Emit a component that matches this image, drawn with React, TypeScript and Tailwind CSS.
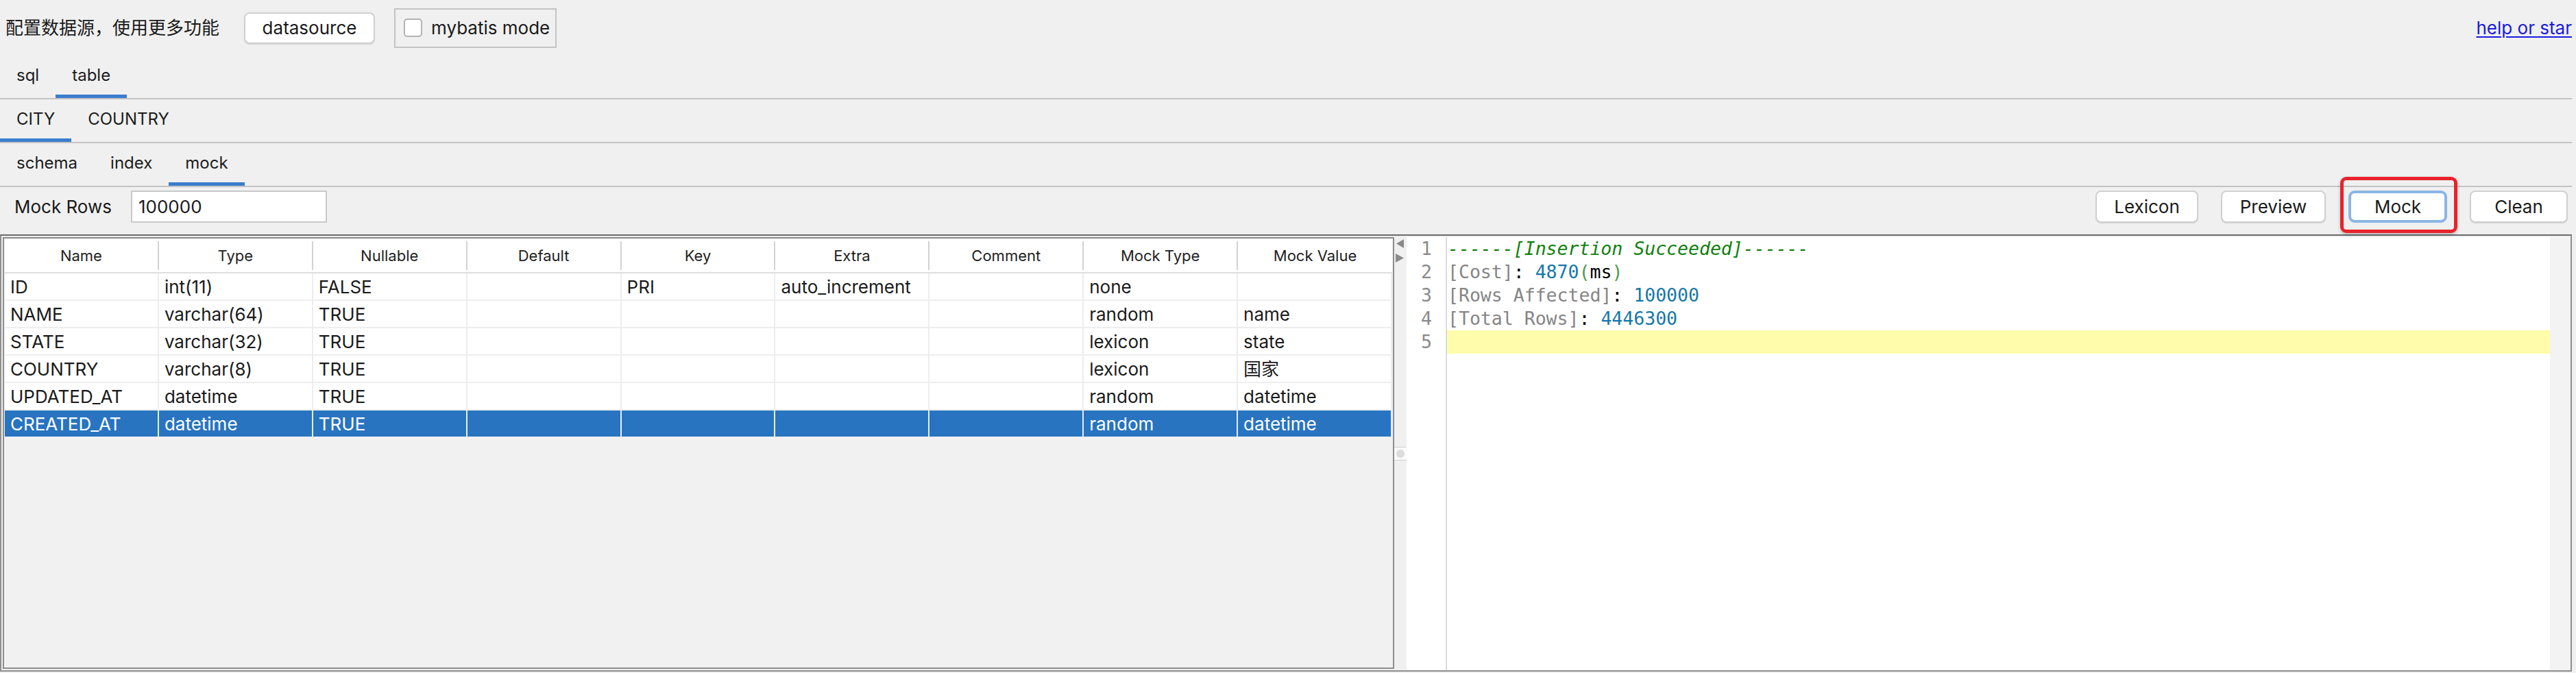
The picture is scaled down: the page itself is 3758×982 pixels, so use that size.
import React from "react";

const cols = ["Name", "Type", "Nullable", "Default", "Key", "Extra", "Comment", "Mock Type", "Mock Value"];
const rows: string[][] = [
  ["ID", "int(11)", "FALSE", "", "PRI", "auto_increment", "", "none", ""],
  ["NAME", "varchar(64)", "TRUE", "", "", "", "", "random", "name"],
  ["STATE", "varchar(32)", "TRUE", "", "", "", "", "lexicon", "state"],
  ["COUNTRY", "varchar(8)", "TRUE", "", "", "", "", "lexicon", "国家"],
  ["UPDATED_AT", "datetime", "TRUE", "", "", "", "", "random", "datetime"],
  ["CREATED_AT", "datetime", "TRUE", "", "", "", "", "random", "datetime"],
];

function TabRow({ tabs, active }: { tabs: string[]; active: number }) {
  return (
    <div className="h-[64px] flex border-b-2 border-[#c3c3c3]">
      {tabs.map((t, i) => (
        <div key={t} className="flex flex-col">
          <div className="flex-1 flex items-center px-[24px] text-[24px] text-[#1c1c1c]">{t}</div>
          <div className={i === active ? "h-[5px] bg-[#3b7dce]" : "h-[5px]"} />
        </div>
      ))}
    </div>
  );
}

function Btn({ label, w }: { label: string; w: string }) {
  return (
    <button
      className={`${w} h-[47px] bg-white border-2 border-[#d0d0d0] rounded-[8px] text-[26px] text-[#1a1a1a] shadow-[0_1px_1px_rgba(0,0,0,0.12)]`}
    >
      {label}
    </button>
  );
}

export default function App() {
  return (
    <div className="w-[3758px] h-[982px] overflow-hidden bg-[#f0f0f0] pr-[6px] font-[Inter,'Noto_Sans_CJK_SC',sans-serif] text-[#1a1a1a]">
      {/* top bar */}
      <div className="h-[81px] flex items-center pl-[8px]">
        <span className="text-[26px]">配置数据源，使用更多功能</span>
        <button className="ml-[36px] w-[191px] h-[46px] bg-white border-2 border-[#d0d0d0] rounded-[8px] text-[26px] shadow-[0_1px_1px_rgba(0,0,0,0.12)]">
          datasource
        </button>
        <div className="ml-[28px] w-[237px] h-[58px] border-2 border-[#c4c4c4] flex items-center pl-[12px] gap-[13px]">
          <span className="w-[27px] h-[27px] bg-white border-2 border-[#b3b3b3] rounded-[5px]" />
          <span className="text-[26px]">mybatis mode</span>
        </div>
        <a className="ml-auto text-[26px] text-[#1a1ae0] underline underline-offset-[3px]">help or star</a>
      </div>

      <TabRow tabs={["sql", "table"]} active={1} />
      <TabRow tabs={["CITY", "COUNTRY"]} active={0} />
      <TabRow tabs={["schema", "index", "mock"]} active={2} />

      {/* mock bar */}
      <div className="h-[69px] flex items-start pt-[5px] pl-[21px] pr-[6px]">
        <span className="h-[47px] flex items-center text-[26px]">Mock Rows</span>
        <div className="ml-[28px] w-[286px] h-[47px] bg-white border-2 border-[#c9c9c9] flex items-center pl-[9px] text-[26px]">
          100000
        </div>
        <div className="ml-auto flex items-start gap-[33px]">
          <Btn label="Lexicon" w="w-[150px]" />
          <Btn label="Preview" w="w-[153px]" />
          <div className="relative">
            <button className="w-[144px] h-[47px] bg-white border-[4px] border-[#8ab6e6] rounded-[9px] text-[26px] text-[#1a1a1a]">
              Mock
            </button>
            <div className="absolute -top-[20px] -left-[12px] -right-[15px] -bottom-[15px] border-[5px] border-[#e8232b] rounded-[9px] shadow-[0_2px_4px_rgba(0,0,0,0.25)]" />
          </div>
          <Btn label="Clean" w="w-[143px]" />
        </div>
      </div>

      {/* split pane */}
      <div className="h-[638px] flex border-2 border-[#8e8e8e] border-t-[#6b6b6b]">
        {/* left scroll pane */}
        <div className="w-[2030px] ml-[2px] my-[2px] border-2 border-[#8e8e8e] bg-[#f1f1f1] p-[1px]">
          <div className="grid grid-cols-9 h-[50px] bg-white border-b-2 border-[#dedede] py-[3px]">
            {cols.map((c, i) => (
              <div
                key={c}
                className={`flex items-center justify-center text-[22px] text-[#222] ${i < 8 ? "border-r-2 border-[#d2d2d2]" : ""}`}
              >
                {c}
              </div>
            ))}
          </div>
          {rows.map((r, ri) => {
            const sel = ri === rows.length - 1;
            return (
              <div
                key={ri}
                className={`grid grid-cols-9 h-[40px] border-b-2 ${sel ? "bg-[#2874c1] text-white border-[#f1f1f1]" : "bg-white border-[#eeeeee]"}`}
              >
                {r.map((v, ci) => (
                  <div
                    key={ci}
                    className={`flex items-center pl-[8px] text-[26px] border-r-2 ${sel ? "border-[#e4ecf6]" : "border-[#ededed]"}`}
                  >
                    {v}
                  </div>
                ))}
              </div>
            );
          })}
        </div>

        {/* divider */}
        <div className="w-[18px] flex flex-col">
          <svg width="18" height="44" viewBox="0 0 18 44">
            <polygon points="3,11.5 14,5 14,18" fill="#8a8a8a" />
            <polygon points="2,26 14,32.5 2,39" fill="#8a8a8a" />
          </svg>
          <div className="mt-[264px] h-[20px] bg-[#fafafa] border-y border-[#d0d0d0] flex items-center justify-center">
            <span className="w-[12px] h-[12px] rounded-full bg-[#dcdcdc]" />
          </div>
        </div>

        {/* right editor */}
        <div className="flex-1 flex mt-[2px] font-['DejaVu_Sans_Mono',monospace] text-[26.5px] leading-[34px]">
          <div className="w-[59px] bg-white border-r-2 border-[#dcdcdc] text-right pr-[20px] text-[#8a8a8a]">
            {[1, 2, 3, 4, 5].map((n) => (
              <div key={n} className="h-[34px]">{n}</div>
            ))}
          </div>
          <div className="flex-1 bg-white whitespace-pre">
            <div className="h-[34px] pl-[1px] italic text-[#11800f]">------[Insertion Succeeded]------</div>
            <div className="h-[34px] pl-[1px]">
              <span className="text-[#858585]">[Cost]</span>
              <span className="text-black">: </span>
              <span className="text-[#1577a8]">4870</span>
              <span className="text-[#4f9a4f]">(</span>
              <span className="text-black">ms</span>
              <span className="text-[#4f9a4f]">)</span>
            </div>
            <div className="h-[34px] pl-[1px]">
              <span className="text-[#858585]">[Rows Affected]</span>
              <span className="text-black">: </span>
              <span className="text-[#1577a8]">100000</span>
            </div>
            <div className="h-[34px] pl-[1px]">
              <span className="text-[#858585]">[Total Rows]</span>
              <span className="text-black">: </span>
              <span className="text-[#1577a8]">4446300</span>
            </div>
            <div className="h-[34px] bg-[#fffcab]" />
          </div>
          <div className="w-[30px] bg-[#f3f3f3]" />
        </div>
      </div>
    </div>
  );
}
